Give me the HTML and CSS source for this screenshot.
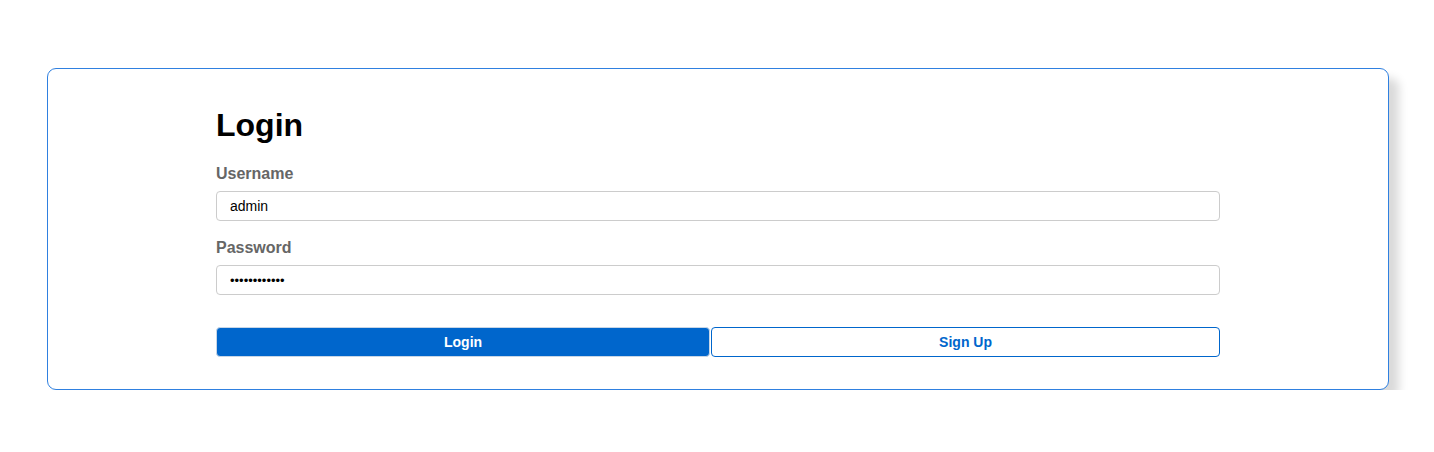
FILE: index.html
```html
<!DOCTYPE html>
<html lang="en">
<head>
<meta charset="utf-8">
<title>Login</title>
<link rel="stylesheet" href="styles.css">
</head>
<body>
<div class="card">
  <form class="form">
    <h1 class="title">Login</h1>
    <label class="label" for="u">Username</label>
    <input class="input" id="u" type="text" value="admin">
    <label class="label" for="p">Password</label>
    <input class="input input-pass" id="p" type="password" value="adminpass123">
    <div class="actions">
      <button type="button" class="btn btn-primary">Login</button>
      <button type="button" class="btn btn-secondary">Sign Up</button>
    </div>
  </form>
</div>
</body>
</html>
```
FILE: styles.css
```css
html, body {
  margin: 0;
  padding: 0;
  background: #fff;
  font-family: "Liberation Sans", Arial, sans-serif;
}
body {
  padding: 68px 45px 0 47px;
}
.card {
  border: 1px solid #2f80e0;
  border-radius: 9px;
  box-shadow: 10px 10px 10px rgba(0, 0, 0, 0.15);
  padding: 38px 0 32px;
  background: #fff;
}
.form {
  width: 1004px;
  margin: 0 auto;
  display: flex;
  flex-direction: column;
}
.title {
  font-size: 32px;
  line-height: 37px;
  font-weight: bold;
  margin: 0 0 21px;
  color: #000;
}
.label {
  font-size: 16px;
  line-height: 18px;
  font-weight: bold;
  color: #666;
  margin-bottom: 8px;
}
.input {
  box-sizing: border-box;
  height: 30px;
  border: 1px solid #ccc;
  border-radius: 4px;
  padding: 0 13px;
  font-family: "Liberation Sans", Arial, sans-serif;
  font-size: 14px;
  color: #000;
  margin: 0 0 18px;
  outline: none;
}
.input-pass {
  margin-bottom: 32px;
  font-size: 13px;
}
.actions {
  display: flex;
  gap: 1px;
}
.btn {
  flex: 1 1 auto;
  box-sizing: border-box;
  height: 30px;
  border-radius: 4px;
  font-family: "Liberation Sans", Arial, sans-serif;
  font-size: 14px;
  font-weight: bold;
  cursor: pointer;
}
.btn-primary {
  background: #0066cc;
  color: #fff;
  border: 1px solid #c8d6e6;
}
.btn-secondary {
  background: #fff;
  color: #0066cc;
  border: 1px solid #0066cc;
}
```
